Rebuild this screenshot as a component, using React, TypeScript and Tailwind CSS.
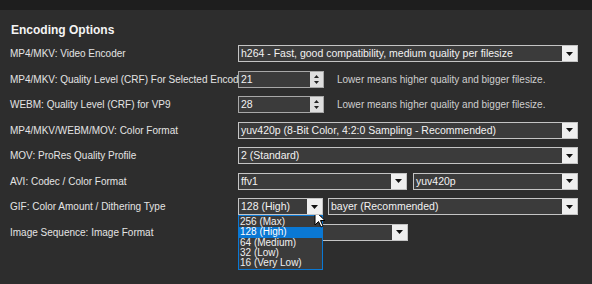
import React from 'react';

function Arrow() {
  return (
    <div className="flex h-full w-[15px] shrink-0 items-center justify-center bg-[#efefef]">
      <svg width="7" height="4" viewBox="0 0 7 4">
        <path d="M0 0h7L3.5 4z" fill="#111" />
      </svg>
    </div>
  );
}

function Select({ value, w, grow }: { value: string; w?: string; grow?: boolean }) {
  return (
    <div
      className={`relative z-10 flex h-[17px] items-stretch border border-[#c4c4c4] bg-[#3b3b3b] ${grow ? 'flex-1' : ''} ${w ?? ''}`}
    >
      <div className="flex-1 overflow-hidden whitespace-nowrap pl-[2px] text-[10.5px] leading-[15px] text-[#f2f2f2]">{value}</div>
      <Arrow />
    </div>
  );
}

function Spin({ value }: { value: string }) {
  return (
    <div className="relative z-10 flex h-[17px] w-[86px] items-stretch border border-[#a8a8a8] bg-[#3b3b3b]">
      <div className="flex-1 pl-[2px] text-[10.5px] leading-[15px] text-[#f2f2f2]">{value}</div>
      <div className="flex w-[13px] flex-col items-center justify-center gap-[3px] bg-[#dedede]">
        <svg width="5" height="3" viewBox="0 0 5 3">
          <path d="M0 3h5L2.5 0z" fill="#222" />
        </svg>
        <svg width="5" height="3" viewBox="0 0 5 3">
          <path d="M0 0h5L2.5 3z" fill="#222" />
        </svg>
      </div>
    </div>
  );
}

function Row({ label, children }: { label: string; children: React.ReactNode }) {
  return (
    <div className="flex h-[25.5px] items-center">
      <div className="w-[238px] shrink-0 whitespace-nowrap pl-[10px]">{label}</div>
      {children}
    </div>
  );
}

const gifOptions = ['256 (Max)', '128 (High)', '64 (Medium)', '32 (Low)', '16 (Very Low)'];

export default function App() {
  return (
    <div className="relative h-[284px] w-[592px] overflow-hidden bg-[#2d2d2d] font-['Liberation_Sans',sans-serif] text-[10px] text-[#e4e4e4]">
      <div className="h-[10px] bg-[#1e1e1e]" />
      <div className="h-[31px] pl-[11px] pt-[13px] text-[12px] font-bold leading-[15px] text-[#f4f4f4]">Encoding Options</div>

      <div className="pr-[14px]">
        <Row label="MP4/MKV: Video Encoder">
          <Select grow value="h264 - Fast, good compatibility, medium quality per filesize" />
        </Row>
        <Row label="MP4/MKV: Quality Level (CRF) For Selected Encoder">
          <Spin value="21" />
          <span className="ml-[13px] text-[#cfcfcf]">Lower means higher quality and bigger filesize.</span>
        </Row>
        <Row label="WEBM: Quality Level (CRF) for VP9">
          <Spin value="28" />
          <span className="ml-[13px] text-[#cfcfcf]">Lower means higher quality and bigger filesize.</span>
        </Row>
        <Row label="MP4/MKV/WEBM/MOV: Color Format">
          <Select grow value="yuv420p (8-Bit Color, 4:2:0 Sampling - Recommended)" />
        </Row>
        <Row label="MOV: ProRes Quality Profile">
          <Select grow value="2 (Standard)" />
        </Row>
        <Row label="AVI: Codec / Color Format">
          <div className="flex flex-1 gap-[6px]">
            <Select w="w-[169px]" value="ffv1" />
            <Select grow value="yuv420p" />
          </div>
        </Row>
        <Row label="GIF: Color Amount / Dithering Type">
          <div className="flex flex-1 gap-[5px]">
            <div className="relative z-20">
              <Select w="w-[85px]" value="128 (High)" />
              <div className="absolute left-0 top-[17px] w-[85px] border border-[#0a78d4] bg-[#3b3b3b] py-[1px]">
                {gifOptions.map((o) => (
                  <div
                    key={o}
                    className={`h-[10.2px] pl-[1px] leading-[10px] ${o === '128 (High)' ? 'bg-[#0a78d4] text-white' : 'text-[#f0f0f0]'}`}
                  >
                    {o}
                  </div>
                ))}
              </div>
              <svg className="absolute left-[76px] top-[12px]" width="12" height="18" viewBox="0 0 12 18">
                <path d="M1 1v14l3.5-3.5 2.5 5.5 2-1-2.5-5.5H11z" fill="#fff" stroke="#000" strokeWidth="1" />
              </svg>
            </div>
            <Select grow value="bayer (Recommended)" />
          </div>
        </Row>
        <Row label="Image Sequence: Image Format">
          <Select w="w-[170px]" value="png" />
        </Row>
      </div>
    </div>
  );
}
